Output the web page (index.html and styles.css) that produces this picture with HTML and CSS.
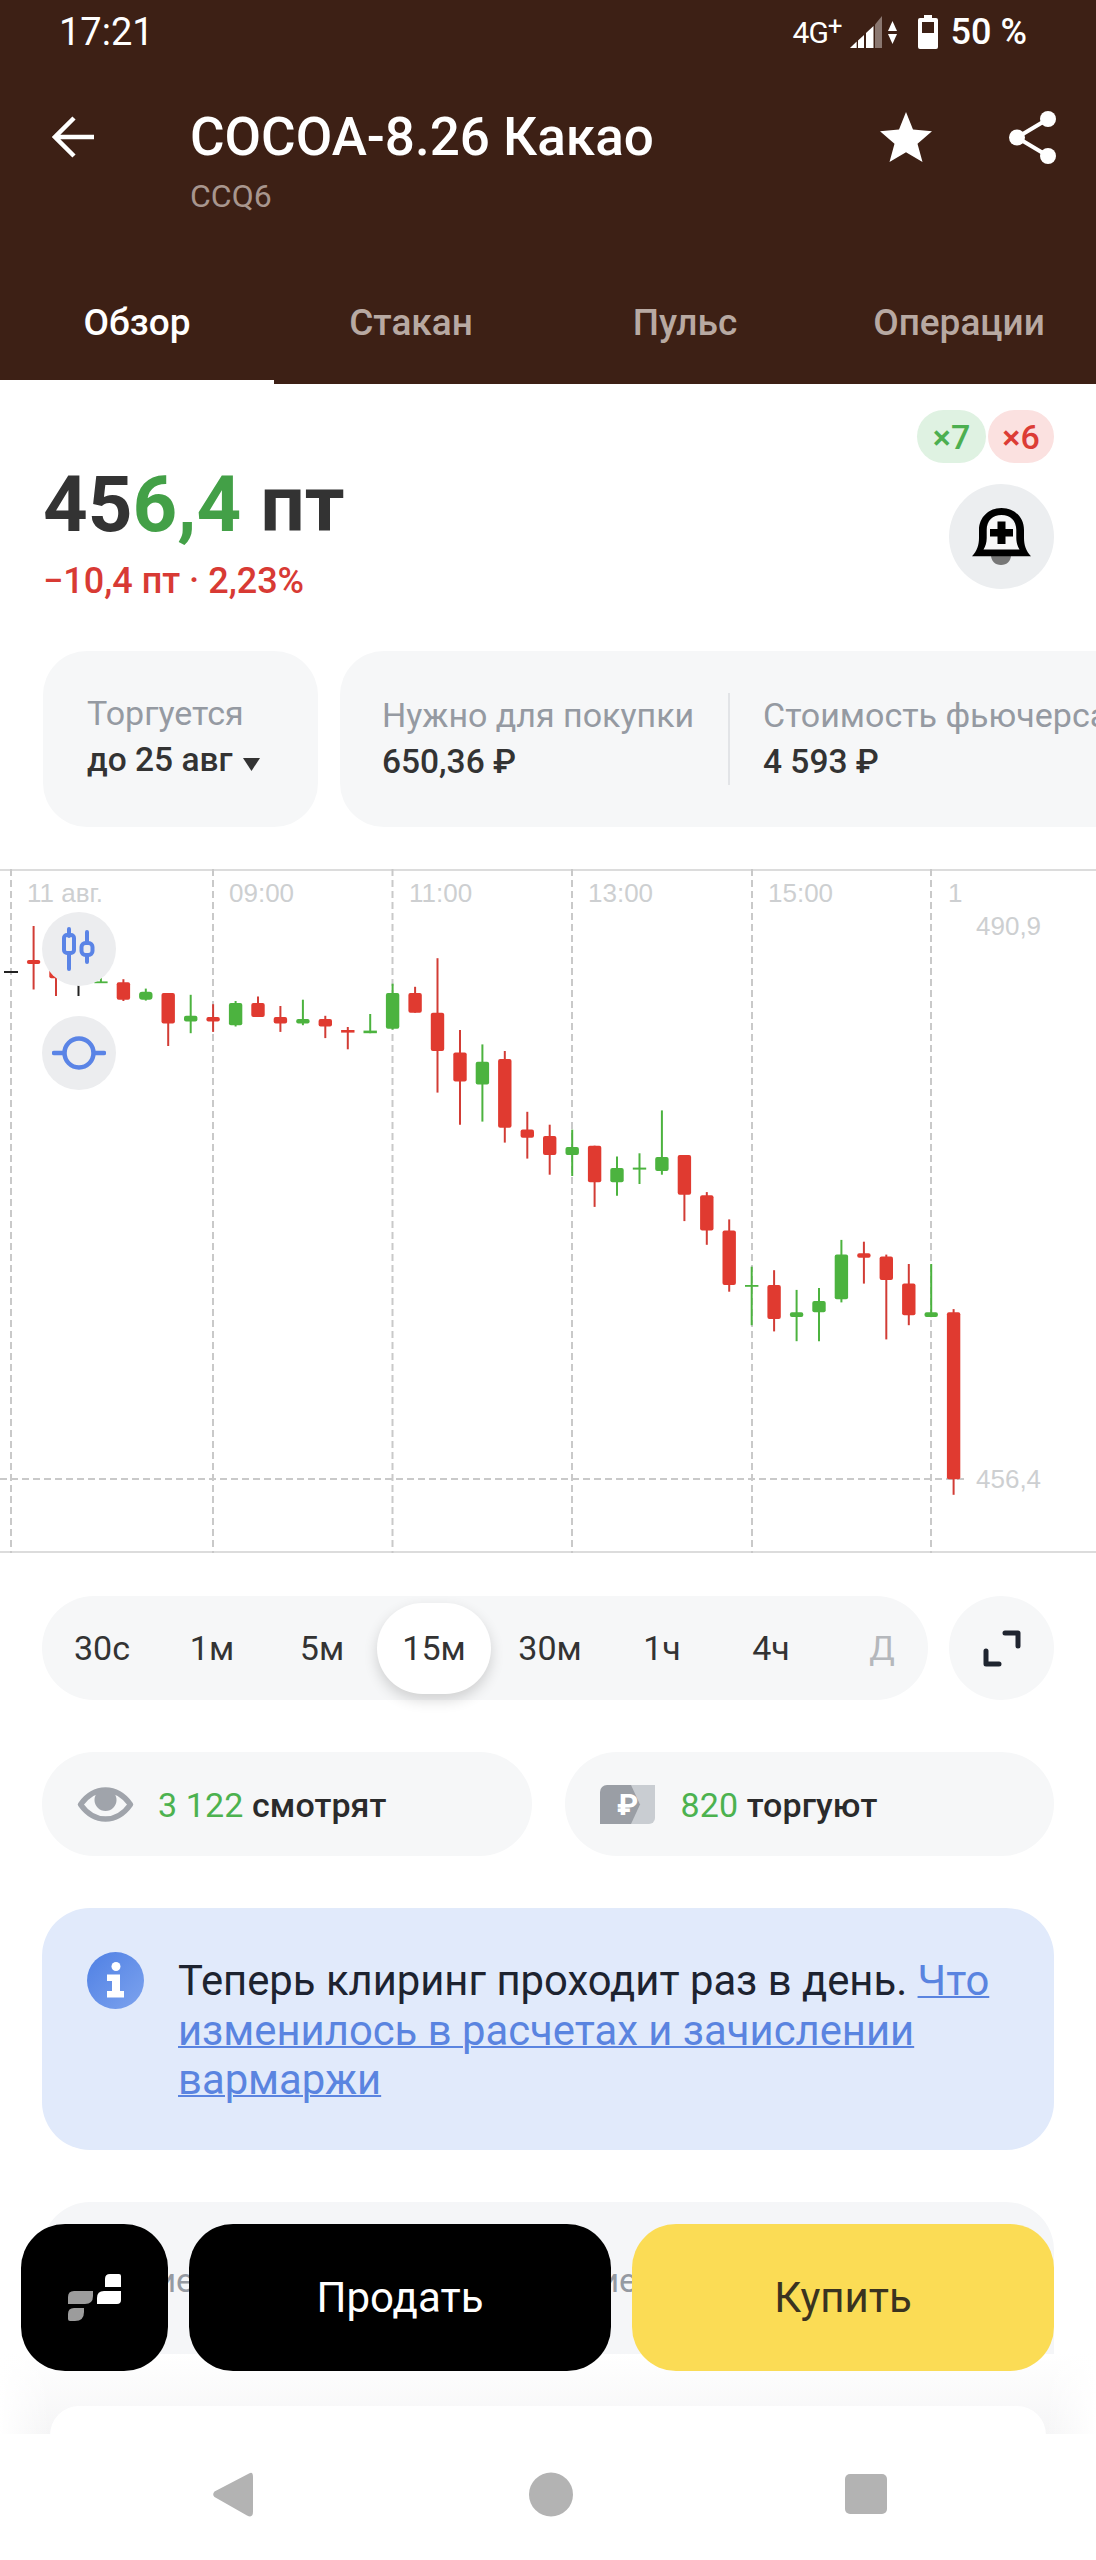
FILE: index.html
```html
<!DOCTYPE html>
<html lang="ru">
<head>
  <meta charset="UTF-8">
  <meta name="viewport" content="width=device-width, initial-scale=1">
  <title>COCOA-8.26 Какао</title>
  <link rel="stylesheet" href="styles.css">
</head>
<body>
  <div class="screen">
    <header class="top">
      <div class="status">
        <span class="clock">17:21</span>
        <div class="status-right">
          <span class="net">4G<sup>+</sup></span>
          <svg class="signal" width="32" height="32" viewBox="0 0 32 32">
            <polygon fill="#fff" points="0,32 6.7,25.5 6.7,32"/>
            <polygon fill="#fff" points="8,24.5 14,19 14,32 8,32"/>
            <polygon fill="#fff" points="16,17 23.5,10 23.5,32 16,32"/>
            <polygon fill="#8a7770" points="25,8.5 32,0 32,32 25,32"/>
          </svg>
          <svg class="arrows" width="9" height="23" viewBox="0 0 9 23">
            <polygon fill="#fff" points="4.5,0 9,10 0,10"/>
            <polygon fill="#fff" points="0,13 9,13 4.5,23"/>
          </svg>
          <svg class="battery" width="20" height="34" viewBox="0 0 20 34">
            <path fill="#fff" fill-rule="evenodd" d="M6 0h8v3h4a2 2 0 0 1 2 2v27a2 2 0 0 1-2 2H2a2 2 0 0 1-2-2V5a2 2 0 0 1 2-2h4zM4 7v11h12V7z"/>
          </svg>
          <span class="percent">50 %</span>
        </div>
      </div>

      <div class="toolbar">
        <div class="tb-icon">
          <svg width="42" height="42" viewBox="0 0 42 42" fill="none" stroke="#fff" stroke-width="4.5">
            <path d="M42 21H3M22 2 3 21l19 19"/>
          </svg>
        </div>
        <div class="title-block">
          <h1 class="title">COCOA-8.26 Какао</h1>
          <div class="ticker">CCQ6</div>
        </div>
        <div class="tb-icon">
          <svg width="52" height="50" viewBox="0 0 52 50">
            <polygon fill="#fff" points="26,0 33,17.500 52,19.300 37.500,31.800 42.500,50 26,40.300 9.500,50 14.500,31.800 0,19.300 19,17.500"/>
          </svg>
        </div>
        <div class="tb-icon share">
          <svg width="47" height="53" viewBox="0 0 47 53" fill="#fff" stroke="#fff">
            <path fill="none" stroke-width="4" d="M39 8 8 26.500 39 45"/>
            <circle cx="39" cy="8" r="8" stroke="none"/>
            <circle cx="8" cy="26.500" r="8" stroke="none"/>
            <circle cx="39" cy="45" r="8" stroke="none"/>
          </svg>
        </div>
      </div>

      <nav class="tabs">
        <a class="tab active">Обзор</a>
        <a class="tab">Стакан</a>
        <a class="tab">Пульс</a>
        <a class="tab">Операции</a>
      </nav>
    </header>

    <section class="quote">
      <div class="price-block">
        <div class="price">45<span class="up">6,4</span> пт</div>
        <div class="change">−10,4 пт · 2,23%</div>
      </div>
      <div class="quote-side">
        <div class="leverage">
          <span class="lev lev-long">×7</span>
          <span class="lev lev-short">×6</span>
        </div>
        <div class="bell">
          <svg width="59" height="57" viewBox="0 0 59 57">
            <path fill="#777" d="M19 47h20c0 6-4 10-10 10s-10-4-10-10z"/>
            <path fill="#f7f7f8" d="M9 44h40l-4-22-8-14-8-4-8 4-8 14z"/>
            <path fill="#000" fill-rule="evenodd" d="M0 48.300C5 43 7 37 7 30v-8C7 9 17 0 29.500 0S52 9 52 22v8c0 7 2 13 7 18.300zM11.500 41.500h36c-2-3-3.200-7-3.200-11.500v-8c0-9.500-6-15-14.800-15s-14.800 5.500-14.800 15v8c0 4.500-1.200 8.500-3.200 11.500z"/>
            <path fill="#000" d="M25.500 13.500h8V21H41v7.500H33.500V36h-8V28.500H18V21h7.500z"/>
          </svg>
        </div>
      </div>
    </section>

    <section class="info-row">
      <div class="info-card info-trade">
        <div class="info-label">Торгуется</div>
        <div class="info-value">до 25 авг
          <svg class="caret" width="17" height="13" viewBox="0 0 17 13"><polygon fill="#333" points="0,0 17,0 8.500,13"/></svg>
        </div>
      </div>
      <div class="info-card info-wide">
        <div class="info-col">
          <div class="info-label">Нужно для покупки</div>
          <div class="info-value">650,36 ₽</div>
        </div>
        <div class="info-col info-col-next">
          <div class="info-label">Стоимость фьючерса</div>
          <div class="info-value">4 593 ₽</div>
        </div>
      </div>
    </section>

    <section class="chart">
      <svg class="chart-svg" width="1096" height="684" viewBox="0 869 1096 684">
        <g class="grid">
          <path d="M11 869V1553M213 869V1553M392.500 869V1553M572 869V1553M752 869V1553M931 869V1553"/>
          <path d="M0 1479H964"/>
        </g>
        <g class="axis">
          <text x="27" y="902">11 авг.</text>
          <text x="229" y="902">09:00</text>
          <text x="409" y="902">11:00</text>
          <text x="588" y="902">13:00</text>
          <text x="768" y="902">15:00</text>
          <text x="948" y="902">1</text>
          <text x="976" y="935">490,9</text>
          <text x="976" y="1488">456,4</text>
        </g>
        <path class="doji" d="M4 972H18"/>
        <g class="red"><path d="M33.600 926V989.500"/><rect x="26.900" y="960" width="13.400" height="4" rx="2"/></g>
        <g class="red"><path d="M56 950V996"/><rect x="49.300" y="969.400" width="13.400" height="8.900" rx="2"/></g>
        <path class="doji" d="M78.500 950V996"/>
        <g class="green"><path d="M100.900 960V983"/><rect x="94.200" y="981.400" width="13.400" height="1.800"/></g>
        <g class="red"><path d="M123.400 979.200V1001"/><rect x="116.700" y="982.300" width="13.400" height="17.400" rx="2"/></g>
        <g class="green"><path d="M145.800 988.600V1000.600"/><rect x="139.100" y="991.700" width="13.400" height="8" rx="3"/></g>
        <g class="red"><path d="M168.200 993V1046"/><rect x="161.500" y="993" width="13.400" height="30.400" rx="2"/></g>
        <g class="green"><path d="M190.700 994.800V1033.200"/><rect x="184" y="1015.800" width="13.400" height="5.800" rx="2"/></g>
        <g class="red"><path d="M213.100 1004.200V1031.900"/><rect x="206.400" y="1017.100" width="13.400" height="4.500" rx="2"/></g>
        <g class="green"><path d="M235.600 1001V1026.500"/><rect x="228.900" y="1002.900" width="13.400" height="22.300" rx="2"/></g>
        <g class="red"><path d="M258 996.600V1017"/><rect x="251.300" y="1002.900" width="13.400" height="14.200" rx="2"/></g>
        <g class="red"><path d="M280.400 1006V1031.900"/><rect x="273.700" y="1017.100" width="13.400" height="6.300" rx="2"/></g>
        <g class="green"><path d="M302.900 999.700V1025.200"/><rect x="296.200" y="1018.900" width="13.400" height="4.500" rx="2"/></g>
        <g class="red"><path d="M325.300 1015.800V1038.100"/><rect x="318.600" y="1018.900" width="13.400" height="7.600" rx="2"/></g>
        <g class="red"><path d="M347.800 1027V1049.300"/><rect x="341.100" y="1030" width="13.400" height="2.600"/></g>
        <g class="green"><path d="M370.200 1014V1033.200"/><rect x="363.500" y="1030.600" width="13.400" height="2.600"/></g>
        <g class="green"><path d="M392.600 983.700V1029.600"/><rect x="385.900" y="993" width="13.400" height="35.700" rx="2"/></g>
        <g class="red"><path d="M415.100 986.800V1012.700"/><rect x="408.400" y="993" width="13.400" height="19.700" rx="2"/></g>
        <g class="red"><path d="M437.500 958.200V1092.600"/><rect x="430.800" y="1012.700" width="13.400" height="38.300" rx="2"/></g>
        <g class="red"><path d="M460 1030V1124.700"/><rect x="453.300" y="1052.400" width="13.400" height="29" rx="2"/></g>
        <g class="green"><path d="M482.400 1044.400V1121.600"/><rect x="475.700" y="1061.800" width="13.400" height="22.700" rx="2"/></g>
        <g class="red"><path d="M504.800 1051V1142.600"/><rect x="498.100" y="1059.100" width="13.400" height="68.700" rx="2"/></g>
        <g class="red"><path d="M527.300 1111.800V1158.600"/><rect x="520.600" y="1129.600" width="13.400" height="8.100" rx="2"/></g>
        <g class="red"><path d="M549.700 1124.700V1174.700"/><rect x="543" y="1135.900" width="13.400" height="19.200" rx="2"/></g>
        <g class="green"><path d="M572.200 1129.600V1176"/><rect x="565.500" y="1147" width="13.400" height="8.100" rx="2"/></g>
        <g class="red"><path d="M594.600 1145.700V1206.900"/><rect x="587.900" y="1145.700" width="13.400" height="36.600" rx="2"/></g>
        <g class="green"><path d="M617 1156.400V1195.700"/><rect x="610.300" y="1168" width="13.400" height="14.300" rx="2"/></g>
        <g class="green"><path d="M639.500 1153.300V1184"/><rect x="632.800" y="1167.600" width="13.400" height="2"/></g>
        <g class="green"><path d="M661.900 1110.400V1174.700"/><rect x="655.200" y="1156.900" width="13.400" height="14.200" rx="2"/></g>
        <g class="red"><path d="M684.400 1155.100V1221.100"/><rect x="677.700" y="1155.100" width="13.400" height="39.700" rx="2"/></g>
        <g class="red"><path d="M706.800 1192.100V1244.800"/><rect x="700.100" y="1195.300" width="13.400" height="35.200" rx="2"/></g>
        <g class="red"><path d="M729.200 1219.400V1291.700"/><rect x="722.500" y="1230.500" width="13.400" height="54.500" rx="2"/></g>
        <g class="green"><path d="M751.700 1266.700V1325.200"/><rect x="745" y="1285" width="13.400" height="1.800"/></g>
        <g class="red"><path d="M774.100 1270.200V1331.400"/><rect x="767.400" y="1285" width="13.400" height="33.900" rx="2"/></g>
        <g class="green"><path d="M796.600 1289.900V1341.200"/><rect x="789.900" y="1312.200" width="13.400" height="4.900" rx="2"/></g>
        <g class="green"><path d="M819 1288.100V1341.200"/><rect x="812.300" y="1301" width="13.400" height="11.200" rx="2"/></g>
        <g class="green"><path d="M841.400 1239.900V1302.400"/><rect x="834.700" y="1254.600" width="13.400" height="44.700" rx="2"/></g>
        <g class="red"><path d="M863.900 1241.700V1283.600"/><rect x="857.200" y="1253.300" width="13.400" height="4.400" rx="2"/></g>
        <g class="red"><path d="M886.300 1254.600V1339.400"/><rect x="879.600" y="1256.400" width="13.400" height="23.600" rx="2"/></g>
        <g class="red"><path d="M908.800 1264V1325.200"/><rect x="902.100" y="1283.600" width="13.400" height="31.700" rx="2"/></g>
        <g class="green"><path d="M931.200 1264V1317.100"/><rect x="924.500" y="1312.200" width="13.400" height="4.900" rx="2"/></g>
        <g class="red"><path d="M953.600 1309.100V1494.800"/><rect x="946.900" y="1312.200" width="13.400" height="167" rx="2"/></g>
      </svg>

      <button class="chart-btn chart-btn-type">
        <svg width="36" height="44" viewBox="0 0 36 44" fill="none" stroke="#5a84e6" stroke-width="4" stroke-linecap="round">
          <path d="M8 2V9M8 26V42M26 5V16M26 28V35"/>
          <rect x="3" y="8" width="10" height="18" rx="3"/>
          <rect x="20.500" y="16" width="11" height="12" rx="4"/>
        </svg>
      </button>
      <button class="chart-btn chart-btn-line">
        <svg width="54" height="34" viewBox="0 0 54 34" fill="none" stroke="#5a84e6" stroke-width="4.500" stroke-linecap="round">
          <circle cx="27" cy="17" r="14.500"/>
          <path d="M2 17H12M42 17H52"/>
        </svg>
      </button>
    </section>

    <section class="frames">
      <div class="frames-pill">
        <span class="frame">30с</span>
        <span class="frame">1м</span>
        <span class="frame">5м</span>
        <span class="frame active">15м</span>
        <span class="frame">30м</span>
        <span class="frame">1ч</span>
        <span class="frame">4ч</span>
        <span class="frame frame-off">Д</span>
      </div>
      <button class="expand">
        <svg width="38" height="37" viewBox="0 0 38 37" fill="none" stroke="#1f2530" stroke-width="5" stroke-linecap="round" stroke-linejoin="round">
          <path d="M22 3h13v13M3 21v13h13"/>
        </svg>
      </button>
    </section>

    <section class="stats">
      <div class="stat">
        <svg class="stat-eye" width="57" height="35" viewBox="0 0 57 35">
          <path fill="none" stroke="#a0a4ab" stroke-width="5.500" stroke-linejoin="round" d="M3.500 17.500C11 7 19 3 28.500 3S46 7 53.500 17.500C46 28 38 32 28.500 32S11 28 3.500 17.500z"/>
          <circle cx="28.500" cy="13" r="11" fill="#a0a4ab"/>
        </svg>
        <span class="stat-text"><span class="stat-num">3 122</span> смотрят</span>
      </div>
      <div class="stat">
        <svg class="stat-rub" width="55" height="39" viewBox="0 0 55 39">
          <path fill="#c9cdd2" d="M20 0H55V33a6 6 0 0 1-6 6H20z"/>
          <path fill="#9a9ea5" d="M7 0H31L40 19.500 31 39H0V7a7 7 0 0 1 7-7z"/>
          <text class="rub-mark" x="17" y="30">₽</text>
        </svg>
        <span class="stat-text stat-text-rub"><span class="stat-num">820</span> торгуют</span>
      </div>
    </section>

    <section class="notice">
      <svg class="notice-icon" width="57" height="57" viewBox="0 0 57 57">
        <defs>
          <linearGradient id="infoFill" x1="0" y1="0" x2="1" y2="1">
            <stop offset="0" stop-color="#4f80e4"/>
            <stop offset="1" stop-color="#7da3ee"/>
          </linearGradient>
        </defs>
        <circle cx="28.500" cy="28.500" r="28.500" fill="url(#infoFill)"/>
        <circle cx="29" cy="14.500" r="4.500" fill="#fff"/>
        <path fill="#fff" d="M20 22.500H33V39H37V45.500H20V39H25V29H20z"/>
      </svg>
      <p class="notice-text">Теперь клиринг проходит раз в день. <a class="notice-link">Что изменилось в расчетах и зачислении вармаржи</a></p>
    </section>

    <section class="hidden-card">
      <span class="hidden-label">Значение</span>
      <span class="hidden-label">Значение</span>
    </section>

    <section class="sheet">
      <div class="sheet-card"></div>
    </section>

    <div class="actions">
      <button class="act act-logo">
        <svg width="53" height="47" viewBox="0 0 53 47">
          <path fill="#9c9c9c" d="M6 17H25V22Q25 30 17 30H0V23Q0 17 6 17zM6 34H16V38Q16 47 7 47H2Q0 47 0 45V40Q0 34 6 34z"/>
          <path fill="#fff" d="M42 0H51Q53 0 53 2V13H37V5Q37 0 42 0zM36 17H53V26Q53 30 49 30H29V24Q29 17 36 17z"/>
        </svg>
      </button>
      <button class="act act-sell">Продать</button>
      <button class="act act-buy">Купить</button>
    </div>

    <nav class="sysnav">
      <svg width="40" height="45" viewBox="0 0 40 45"><path fill="#b3b3b3" d="M36 1.500 1.500 19.500a4 4 0 0 0 0 5.500L34 43.500q6 3 6-4V5q0-6-4-3.500z"/></svg>
      <svg class="sys-home" width="44" height="45" viewBox="0 0 44 45"><circle cx="22" cy="22.500" r="22" fill="#b3b3b3"/></svg>
      <svg width="42" height="40" viewBox="0 0 42 40"><rect width="42" height="40" rx="5" fill="#b3b3b3"/></svg>
    </nav>
  </div>
</body>
</html>
```

FILE: styles.css
```css
* {
  box-sizing: border-box;
}

body {
  margin: 0;
  background: #fff;
  font-family: Roboto, "Noto Sans", sans-serif;
  color: #333;
}

.screen {
  position: relative;
  width: 1096px;
  height: 2560px;
  overflow: hidden;
  background: #fff;
}

button {
  border: 0;
  padding: 0;
  font-family: inherit;
}

/* header */
.top {
  height: 384px;
  background: #3d2015;
  color: #fff;
}

.status {
  display: flex;
  justify-content: space-between;
  align-items: center;
  height: 64px;
  padding: 0 69px 0 59px;
  font-size: 38px;
}

.status-right {
  display: flex;
  align-items: center;
}

.net {
  font-size: 30px;
  letter-spacing: -1px;
  margin-right: 8px;
}

.net sup {
  font-size: 26px;
  line-height: 0;
  vertical-align: 8px;
}

.arrows {
  margin: 0 21px 0 6px;
}

.percent {
  margin-left: 13px;
  font-size: 36px;
  font-weight: 500;
}

.toolbar {
  display: flex;
  align-items: flex-start;
  height: 208px;
  padding: 40px 40px 0 52px;
}

.tb-icon {
  display: flex;
  align-items: center;
  height: 66px;
}

.tb-icon.share {
  margin-left: 77px;
}

.title-block {
  flex: 1;
  margin-left: 96px;
}

.title {
  margin: 0;
  font-size: 53px;
  font-weight: 500;
  line-height: 66px;
}

.ticker {
  margin-top: 6px;
  font-size: 32px;
  line-height: 40px;
  color: #a8968e;
}

.tabs {
  display: grid;
  grid-template-columns: repeat(4, 1fr);
  height: 112px;
}

.tab {
  padding-top: 29px;
  text-align: center;
  font-size: 37px;
  font-weight: 500;
  line-height: 44px;
  color: #b8a9a2;
}

.tab.active {
  color: #fff;
  border-bottom: 4px solid #fff;
}

/* price */
.quote {
  display: flex;
  justify-content: space-between;
  height: 267px;
  padding: 26px 42px 0 43px;
}

.price-block {
  padding-top: 49px;
}

.price {
  font-size: 78px;
  font-weight: 700;
  line-height: 92px;
}

.up {
  color: #43a047;
}

.change {
  margin-top: 7px;
  font-size: 36px;
  font-weight: 500;
  line-height: 46px;
  color: #d83a34;
}

.quote-side {
  display: flex;
  flex-direction: column;
  align-items: flex-end;
}

.leverage {
  display: flex;
  gap: 2px;
}

.lev {
  display: flex;
  align-items: center;
  justify-content: center;
  height: 53px;
  border-radius: 27px;
  font-size: 34px;
  font-weight: 500;
}

.lev-long {
  width: 69px;
  background: #dff2e2;
  color: #4caf50;
}

.lev-short {
  width: 66px;
  background: #fbe1e0;
  color: #dc3c35;
}

.bell {
  display: flex;
  align-items: center;
  justify-content: center;
  width: 105px;
  height: 105px;
  margin-top: 21px;
  border-radius: 50%;
  background: #eceef0;
}

/* info cards */
.info-row {
  display: flex;
  gap: 22px;
  height: 176px;
  padding-left: 43px;
  overflow: hidden;
}

.info-card {
  flex-shrink: 0;
  height: 176px;
  padding-top: 40px;
  border-radius: 44px;
  background: #f6f7f8;
  white-space: nowrap;
}

.info-trade {
  width: 275px;
  padding-left: 44px;
}

.info-wide {
  display: flex;
  width: 900px;
  padding-left: 42px;
}

.info-col {
  width: 346px;
  height: 92px;
  margin-top: 2px;
}

.info-col-next {
  width: auto;
  padding-left: 33px;
  border-left: 2px solid #e2e4e7;
}

.info-label {
  font-size: 34px;
  line-height: 44px;
  color: #959aa2;
}

.info-value {
  margin-top: 3px;
  font-size: 33.500px;
  font-weight: 500;
  line-height: 44px;
  color: #333;
}

.caret {
  margin-left: 2px;
}

/* chart */
.chart {
  position: relative;
  height: 684px;
  margin-top: 42px;
  border-top: 2px solid #dcdcdc;
  border-bottom: 2px solid #dcdcdc;
}

.chart-svg {
  display: block;
  margin-top: -2px;
}

.grid path {
  fill: none;
  stroke: #c9c9c9;
  stroke-width: 2;
  stroke-dasharray: 7 4;
}

.axis text {
  font-family: "Liberation Sans", Arial, sans-serif;
  font-size: 26px;
  fill: #cdcfd1;
}

.red path,
.green path,
.doji {
  fill: none;
  stroke-width: 2;
}

.red path {
  stroke: #d23c35;
}

.red rect {
  fill: #e03a30;
}

.green path {
  stroke: #4cb33f;
}

.green rect {
  fill: #4cb33f;
}

.doji {
  stroke: #222;
}

.chart-btn {
  position: absolute;
  left: 42px;
  display: flex;
  align-items: center;
  justify-content: center;
  width: 74px;
  height: 74px;
  border-radius: 50%;
  background: #ecedef;
}

.chart-btn-type {
  top: 41px;
}

.chart-btn-line {
  top: 145px;
}

/* time frames */
.frames {
  display: flex;
  gap: 21px;
  height: 104px;
  margin: 43px 42px 0;
}

.frames-pill {
  display: grid;
  grid-template-columns: 110px 110px 110px 114px 118px 106px 112px 110px;
  align-items: center;
  width: 886px;
  padding-left: 5px;
  border-radius: 52px;
  background: #f6f7f8;
  font-size: 34px;
}

.frame {
  display: flex;
  align-items: center;
  justify-content: center;
  height: 91px;
}

.frame.active {
  border-radius: 46px;
  background: #fff;
  box-shadow: 0 6px 14px rgba(0, 0, 0, 0.16);
}

.frame-off {
  color: #b5b8bc;
}

.expand {
  display: flex;
  align-items: center;
  justify-content: center;
  width: 105px;
  height: 104px;
  border-radius: 50%;
  background: #f6f7f8;
}

/* viewers */
.stats {
  display: flex;
  gap: 33px;
  height: 104px;
  margin: 52px 42px 0;
}

.stat {
  display: flex;
  flex: 1;
  align-items: center;
  padding-left: 35px;
  border-radius: 52px;
  background: #f6f7f8;
  font-size: 34px;
  font-weight: 500;
  color: #2b2b2b;
}

.stat-text {
  margin-left: 24px;
  padding-top: 2px;
  letter-spacing: 0.1px;
}

.stat-text-rub {
  margin-left: 26px;
}

.stat-num {
  font-weight: 400;
  color: #4cb24f;
}

.rub-mark {
  font-size: 30px;
  font-weight: 700;
  fill: #fff;
}

/* notice */
.notice {
  display: flex;
  align-items: flex-start;
  gap: 34px;
  height: 242px;
  margin: 52px 42px 0;
  padding: 44px 54px 0 45px;
  border-radius: 48px;
  background: #e1eafb;
}

.notice-icon {
  flex-shrink: 0;
}

.notice-text {
  margin: 4px 0 0;
  font-size: 41.800px;
  line-height: 49.500px;
  color: #1d2330;
}

.notice-link {
  color: #5a84e0;
  text-decoration: underline;
  text-decoration-thickness: 2px;
}

/* cards under the buttons */
.hidden-card {
  display: flex;
  gap: 291px;
  height: 152px;
  margin: 52px 42px 0;
  padding: 56px 0 0;
  border-radius: 48px 48px 0 0;
  background: #f5f6f8;
}

.hidden-label {
  font-size: 34px;
  line-height: 44px;
  color: #959aa2;
}

.sheet {
  height: 81px;
  padding: 52px 50px 0;
  background:
    linear-gradient(90deg, #fff, transparent 50px, transparent 1046px, #fff),
    linear-gradient(180deg, #fff, #f5f5f6);
}

.sheet-card {
  height: 29px;
  border-radius: 46px 46px 0 0;
  background: #fff;
}

/* fixed bottom */
.actions {
  position: absolute;
  left: 21px;
  top: 2224px;
  display: flex;
  gap: 21px;
}

.act {
  height: 147px;
  border-radius: 44px;
  font-size: 42px;
}

.act-logo {
  display: flex;
  align-items: center;
  justify-content: center;
  width: 147px;
  background: #000;
}

.act-sell {
  width: 422px;
  background: #000;
  color: #fff;
}

.act-buy {
  width: 422px;
  background: #fbdc55;
  color: #3a3320;
}

.sysnav {
  position: absolute;
  left: 0;
  bottom: 0;
  display: flex;
  align-items: center;
  width: 100%;
  height: 126px;
  padding: 0 0 6px 213px;
  background: #fff;
}

.sys-home {
  margin: 0 272px 0 276px;
}
```
